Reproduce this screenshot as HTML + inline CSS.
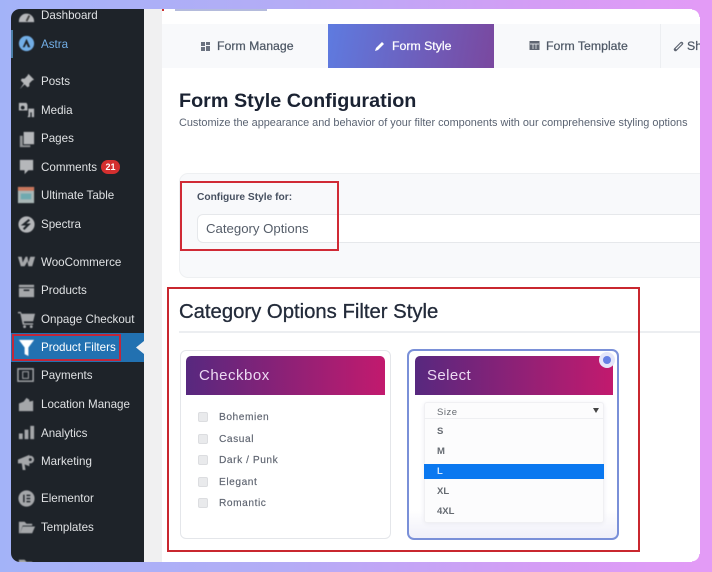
<!DOCTYPE html>
<html><head><meta charset="utf-8">
<style>
*{box-sizing:border-box;margin:0;padding:0}
html,body{width:712px;height:572px;overflow:hidden}
body{position:relative;background:linear-gradient(90deg,#a3b3f8 0%,#b4acf6 40%,#d49df5 75%,#e39bf6 100%);font-family:"Liberation Sans",sans-serif}
.a{position:absolute;white-space:nowrap}
#side{position:absolute;left:11px;top:9px;width:133px;height:553px;background:#1e2329;border-radius:9px 0 0 9px;overflow:hidden}
.m{position:absolute;left:41px;color:#dfe1e3;font-size:11.6px;white-space:nowrap;filter:blur(.35px)}
svg.i{position:absolute;left:17px;width:19px;height:19px;filter:blur(.4px)}
.t{font-size:12.3px;font-weight:normal;color:#4f5966;-webkit-text-stroke:.25px currentColor;filter:blur(.35px)}
.c{font-size:10.2px;color:#5e6470;letter-spacing:.55px;left:219px;-webkit-text-stroke:.15px #5e6470;filter:blur(.35px)}
.b{position:absolute;left:198px;width:10px;height:10px;background:#e9eaec;border:1px solid #dcdde0;border-radius:2px}
.o{left:437px;font-size:9.5px;font-weight:bold;color:#666b72;filter:blur(.3px)}
</style></head><body>
<div id="side"></div>
<div class="a" style="left:144px;top:9px;width:18px;height:553px;background:#f0f0f1"></div>
<div class="a" style="left:162px;top:9px;width:538px;height:553px;background:#fff;border-radius:0 7px 7px 0"></div>
<div class="a" style="left:175px;top:9px;width:92px;height:2px;background:#b4bbdc"></div>
<div class="a" style="left:162px;top:9px;width:2px;height:2px;background:#c33"></div>

<!-- sidebar -->
<div class="a" style="left:11px;top:30px;width:2px;height:28px;background:#4c7fa8"></div>
<svg class="i" style="top:6px" viewBox="0 0 20 20"><path d="M2 16a8 8 0 1 1 16 0v1H2z" fill="#b5b7ba"/><path d="M10 16l3-6" stroke="#444" stroke-width="2"/></svg>
<div class="m" style="top:9px">Dashboard</div>
<svg class="i" style="top:34px" viewBox="0 0 20 20"><circle cx="10" cy="10" r="8" fill="#72aee6"/><path d="M10 5l4 9h-2.500l-1.500-4-2 4H6z" fill="#1e2329"/></svg>
<div class="m" style="top:38px;color:#72aee6">Astra</div>
<svg class="i" style="top:72px" viewBox="0 0 20 20"><path d="M12 2l6 6-2 1-3 3 0 3-2 1-3-3-5 5 4-6-3-3 1-2 3 0 3-3z" fill="#b5b7ba"/></svg>
<div class="m" style="top:75px">Posts</div>
<svg class="i" style="top:101px" viewBox="0 0 20 20"><path d="M2 2h8l1 2v6H2z" fill="#b5b7ba"/><circle cx="6" cy="7" r="2" fill="#1e2329"/><path d="M12 8h6v9h-2.500v-5H14v5h-3l1-2z" fill="#b5b7ba"/></svg>
<div class="m" style="top:104px">Media</div>
<svg class="i" style="top:130px" viewBox="0 0 20 20"><path d="M7 2h11v13H7z" fill="#b5b7ba"/><path d="M3 6h3v10h8v2H3z" fill="#8f9295"/></svg>
<div class="m" style="top:132px">Pages</div>
<svg class="i" style="top:157px" viewBox="0 0 20 20"><path d="M3 3h14v11h-5l-4 4v-4H3z" fill="#b5b7ba"/></svg>
<div class="m" style="top:161px">Comments</div>
<div class="a" style="left:101px;top:160px;width:19px;height:14px;border-radius:7px;background:#d32f2f;color:#fff;font-size:9px;font-weight:bold;text-align:center;line-height:14px">21</div>
<svg class="i" style="top:186px" viewBox="0 0 20 20"><rect x="1" y="1" width="17" height="17" fill="#a9b6b6"/><rect x="1" y="1" width="17" height="4" fill="#c9765c"/><rect x="4" y="8" width="11" height="6" fill="#6faab0"/></svg>
<div class="m" style="top:189px">Ultimate Table</div>
<svg class="i" style="top:215px" viewBox="0 0 20 20"><circle cx="10" cy="10" r="8.500" fill="#b5b7ba"/><path d="M13 5L7 10h5l-5 5" fill="none" stroke="#1e2329" stroke-width="2.200"/></svg>
<div class="m" style="top:218px">Spectra</div>
<svg class="i" style="top:252px" viewBox="0 0 20 20"><path d="M1 5h4l1 6 3-6h2l1 6 2-6h5l-3 10h-4l-1-5-3 5H4z" fill="#a5a7aa"/></svg>
<div class="m" style="top:256px">WooCommerce</div>
<svg class="i" style="top:281px" viewBox="0 0 20 20"><path d="M2 4h16v13H2z" fill="#a5a7aa"/><rect x="2" y="6.500" width="16" height="1" fill="#1e2329"/><rect x="7" y="9" width="6" height="1.500" fill="#1e2329"/></svg>
<div class="m" style="top:284px">Products</div>
<svg class="i" style="top:310px" viewBox="0 0 20 20"><path d="M1 2h3l1 2h14l-2 8H7l.5 2H17v1.500H6L3.500 3.500H1z" fill="#a5a7aa"/><circle cx="8" cy="17.500" r="1.500" fill="#a5a7aa"/><circle cx="15" cy="17.500" r="1.500" fill="#a5a7aa"/></svg>
<div class="m" style="top:313px">Onpage Checkout</div>

<div class="a" style="left:11px;top:333px;width:133px;height:29px;background:#2271b1"></div>
<div class="a" style="left:12px;top:334px;width:109px;height:27px;border:2px solid #c2273a"></div>
<svg class="a" style="left:136px;top:341px" width="8" height="13" viewBox="0 0 8 13"><path d="M8 0v13L0 6.500z" fill="#f0f0f1"/></svg>
<svg class="i" style="top:338px" viewBox="0 0 20 20"><path d="M2 2h16l-6 8v9l-4-2v-7z" fill="#fff"/></svg>
<div class="m" style="top:341px;color:#fff">Product Filters</div>

<svg class="i" style="top:366px" viewBox="0 0 20 20"><path d="M1 3h16v13H1z" fill="none" stroke="#a5a7aa" stroke-width="1.500"/><rect x="6" y="6" width="6" height="7" fill="none" stroke="#a5a7aa"/></svg>
<div class="m" style="top:369px">Payments</div>
<svg class="i" style="top:395px" viewBox="0 0 20 20"><path d="M2 9l5-2 3-4 3 2 0 2 4-1v11H2z" fill="#a5a7aa"/></svg>
<div class="m" style="top:398px">Location Manage</div>
<svg class="i" style="top:423px" viewBox="0 0 20 20"><rect x="2" y="11" width="4" height="6" fill="#a5a7aa"/><rect x="8" y="7" width="4" height="10" fill="#a5a7aa"/><rect x="14" y="3" width="4" height="14" fill="#a5a7aa"/></svg>
<div class="m" style="top:427px">Analytics</div>
<svg class="i" style="top:452px" viewBox="0 0 20 20"><path d="M1 8l12-5v12L8 13l1 6H6l-1-7H1z" fill="#a5a7aa"/><circle cx="14" cy="8" r="4" fill="#a5a7aa"/><circle cx="14" cy="8" r="1.500" fill="#1e2329"/></svg>
<div class="m" style="top:455px">Marketing</div>
<svg class="i" style="top:489px" viewBox="0 0 20 20"><circle cx="10" cy="10" r="8.500" fill="#a5a7aa"/><rect x="6.500" y="6" width="1.500" height="8" fill="#1e2329"/><rect x="10" y="6" width="4" height="1.500" fill="#1e2329"/><rect x="10" y="9.300" width="4" height="1.500" fill="#1e2329"/><rect x="10" y="12.500" width="4" height="1.500" fill="#1e2329"/></svg>
<div class="m" style="top:492px">Elementor</div>
<svg class="i" style="top:518px" viewBox="0 0 20 20"><path d="M2 4h6l2 2h6v2H6l-3 8H2z" fill="#a5a7aa"/><path d="M6 9h13l-3 7H3z" fill="#a5a7aa"/></svg>
<div class="m" style="top:521px">Templates</div>
<svg class="i" style="top:556px" viewBox="0 0 20 20"><path d="M2 4h6l2 2h6v12H2z" fill="#a5a7aa"/></svg>
<div class="a" style="left:0;top:562px;width:712px;height:10px;background:linear-gradient(90deg,#a3b3f8 0%,#b4acf6 40%,#d49df5 75%,#e39bf6 100%)"></div>

<!-- tabs -->
<div class="a" style="left:162px;top:24px;width:538px;height:44px;background:#f8f9fb"></div>
<div class="a" style="left:328px;top:24px;width:166px;height:44px;background:linear-gradient(100deg,#5e7be0,#7a489f)"></div>
<div class="a" style="left:660px;top:24px;width:1px;height:44px;background:#eceef1"></div>
<svg class="a" style="left:200px;top:41px;filter:blur(.3px)" width="11" height="11" viewBox="0 0 11 11"><path d="M1 1h4v4H1zM6 1h4v3H6zM1 6h4v4H1zM6 5h4v5H6z" fill="#6b7280"/></svg>
<div class="a t" style="left:217px;top:39px">Form Manage</div>
<svg class="a" style="left:374px;top:40px;filter:blur(.3px)" width="12" height="12" viewBox="0 0 12 12"><path d="M1 11l1-3 6-6 2 2-6 6z" fill="#fff"/></svg>
<div class="a t" style="left:392px;top:39px;color:#fff">Form Style</div>
<svg class="a" style="left:529px;top:40px;filter:blur(.3px)" width="11" height="11" viewBox="0 0 11 11"><rect x=".5" y="1" width="10" height="9" fill="#5f6672"/><path d="M1 4h9M4 4v5M7 4v5" stroke="#f8f9fb" stroke-width=".7"/></svg>
<div class="a t" style="left:546px;top:39px">Form Template</div>
<svg class="a" style="left:673px;top:40px;filter:blur(.3px)" width="11" height="12" viewBox="0 0 11 12"><path d="M2.500 9.500l6-6" stroke="#5f6672" stroke-width="3.400" stroke-linecap="round"/><path d="M3 9l5.500-5.500" stroke="#f8f9fb" stroke-width="1.200"/></svg>
<div class="a t" style="left:687px;top:39px;width:13px;overflow:hidden">Sh</div>

<!-- heading -->
<div class="a" style="left:179px;top:90px;font-size:19.8px;font-weight:bold;color:#1a2232;filter:blur(.35px)">Form Style Configuration</div>
<div class="a" style="left:179px;top:117px;font-size:10.9px;color:#5a6372;filter:blur(.35px)">Customize the appearance and behavior of your filter components with our comprehensive styling options</div>

<!-- config -->
<div class="a" style="left:179px;top:173px;width:530px;height:105px;background:#f8f9fb;border:1px solid #eef0f2;border-radius:9px"></div>
<div class="a" style="left:197px;top:192px;font-size:10.2px;font-weight:bold;color:#465060;filter:blur(.35px)">Configure Style for:</div>
<div class="a" style="left:197px;top:214px;width:520px;height:29px;background:#fff;border:1px solid #e6e8eb;border-radius:6px"></div>
<div class="a" style="left:206px;top:221px;font-size:13.2px;color:#555d69;filter:blur(.35px)">Category Options</div>
<div class="a" style="left:180px;top:181px;width:159px;height:70px;border:2px solid #d02a35"></div>

<!-- filter style -->
<div class="a" style="left:179px;top:301px;font-size:20.3px;font-weight:normal;color:#232b3a;-webkit-text-stroke:.3px #232b3a;filter:blur(.35px)">Category Options Filter Style</div>
<div class="a" style="left:179px;top:331px;width:521px;height:2px;background:#eceef1"></div>
<div class="a" style="left:167px;top:287px;width:473px;height:265px;border:2px solid #c9272f"></div>

<!-- checkbox card -->
<div class="a" style="left:180px;top:350px;width:211px;height:189px;background:#fff;border:1px solid #e4e6ea;border-radius:6px"></div>
<div class="a" style="left:186px;top:356px;width:199px;height:39px;background:linear-gradient(90deg,#57287f,#c21a6e);border-radius:5px 5px 0 0"></div>
<div class="a" style="left:199px;top:367px;font-size:15px;letter-spacing:.5px;color:#ecd9f2;filter:blur(.3px)">Checkbox</div>
<div class="b" style="top:412px"></div><div class="a c" style="top:412px">Bohemien</div>
<div class="b" style="top:434px"></div><div class="a c" style="top:434px">Casual</div>
<div class="b" style="top:455px"></div><div class="a c" style="top:455px">Dark / Punk</div>
<div class="b" style="top:477px"></div><div class="a c" style="top:477px">Elegant</div>
<div class="b" style="top:498px"></div><div class="a c" style="top:498px">Romantic</div>

<!-- select card -->
<div class="a" style="left:407px;top:349px;width:212px;height:191px;background:linear-gradient(#fff 85%,#f0f0f9);border:2px solid #7a90d8;border-radius:7px"></div>
<div class="a" style="left:415px;top:356px;width:198px;height:39px;background:linear-gradient(90deg,#57287f,#c21a6e);border-radius:5px 5px 0 0"></div>
<div class="a" style="left:427px;top:367px;font-size:15px;letter-spacing:.4px;color:#ecd9f2;filter:blur(.3px)">Select</div>
<div class="a" style="left:599px;top:352px;width:16px;height:16px;background:#e4e6fa;border-radius:50%"></div>
<div class="a" style="left:603px;top:356px;width:8px;height:8px;background:#6680e4;border-radius:50%"></div>
<div class="a" style="left:424px;top:402px;width:180px;height:121px;background:#fcfcfd;border:1px solid #f0f0f3;border-radius:3px;box-shadow:0 1px 4px #ebebf2"></div>
<div class="a" style="left:424px;top:418px;width:180px;height:1px;background:#eeeff2"></div>
<div class="a" style="left:437px;top:407px;font-size:9.5px;letter-spacing:.5px;color:#666b72;filter:blur(.3px)">Size</div>
<svg class="a" style="left:593px;top:408px" width="6" height="5" viewBox="0 0 6 5"><path d="M0 0h6L3 5z" fill="#444"/></svg>
<div class="a o" style="top:426px">S</div>
<div class="a o" style="top:446px">M</div>
<div class="a" style="left:424px;top:464px;width:180px;height:15px;background:#0a78f0"></div>
<div class="a o" style="top:466px;color:#cfe6ff">L</div>
<div class="a o" style="top:486px">XL</div>
<div class="a o" style="top:506px">4XL</div>

<!-- right frame edge -->
<div class="a" style="left:700px;top:0;width:12px;height:572px;background:#e39bf6"></div>
<div class="a" style="left:692px;top:9px;width:8px;height:8px;background:radial-gradient(circle at 0 100%,transparent 7px,#e39bf6 7.5px)"></div>
<div class="a" style="left:692px;top:554px;width:8px;height:8px;background:radial-gradient(circle at 0 0,transparent 7px,#e39bf6 7.5px)"></div>
</body></html>
